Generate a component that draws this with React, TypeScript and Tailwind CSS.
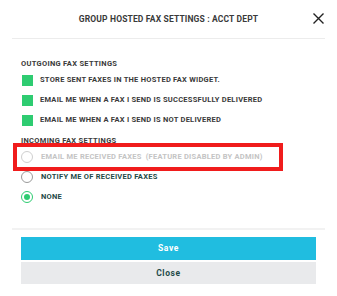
import { useState } from "react";

const outgoing = [
  "Store sent faxes in the hosted fax widget.",
  "Email me when a fax I send is successfully delivered",
  "Email me when a fax I send is not delivered",
];

const incoming = [
  { id: "email", label: "Email me received faxes", note: "(Feature disabled by admin)", disabled: true },
  { id: "notify", label: "Notify me of received faxes" },
  { id: "none", label: "None" },
];

export default function App() {
  const [choice, setChoice] = useState("none");

  return (
    <div className="w-[337px] h-[296px] bg-white font-['Roboto',sans-serif] font-bold uppercase">
      {/* Header */}
      <div className="relative flex h-[38px] items-center justify-center">
        <h2 className="text-[8.5px] tracking-[0.15px] text-[#3a3a3a]">
          Group Hosted Fax Settings : Acct Dept
        </h2>
        <button className="absolute right-[13px] top-[13px] text-[#222]" aria-label="Close">
          <svg width="11" height="11" viewBox="0 0 11 11" fill="none" stroke="currentColor" strokeWidth="1.4">
            <path d="M0.5 0.5L10.5 10.5M10.5 0.5L0.5 10.5" />
          </svg>
        </button>
      </div>
      <div className="mx-3 h-px bg-[#ececec]" />

      <div className="px-[21px] pt-[19px]">
        <p className="h-3 leading-3 text-[7.5px] tracking-[0.3px] text-[#3a3a3a]">Outgoing Fax Settings</p>
        {outgoing.map((label) => (
          <div key={label} className="flex h-5 items-center gap-[7px]">
            <span className="ml-px h-[11px] w-[11px] bg-[#2ecc71]" />
            <span className="text-[7.5px] tracking-[0.25px] text-[#3a3a3a]">{label}</span>
          </div>
        ))}

        <p className="mt-[5px] h-3 leading-3 text-[7.5px] tracking-[0.3px] text-[#3a3a3a]">Incoming Fax Settings</p>
        <div>
          {incoming.map((opt) => {
            const selected = choice === opt.id;
            return (
              <div
                key={opt.id}
                onClick={() => !opt.disabled && setChoice(opt.id)}
                className="relative flex h-5 items-center gap-2 cursor-pointer"
              >
                <span
                  className={
                    opt.disabled
                      ? "h-3 w-3 rounded-full border border-[#cfcfcf]"
                      : selected
                      ? "flex h-3 w-3 items-center justify-center rounded-full border-[1.5px] border-[#2ecc71]"
                      : "h-3 w-3 rounded-full border-[1.5px] border-[#9a9a9a]"
                  }
                >
                  {selected && <span className="h-[6px] w-[6px] rounded-full bg-[#2ecc71]" />}
                </span>
                <span
                  className={
                    opt.disabled
                      ? "text-[7.5px] tracking-[0.25px] text-[#c4c4c4]"
                      : "text-[7.5px] tracking-[0.25px] text-[#1f4a48]"
                  }
                >
                  {opt.label}
                  {opt.note && <span className="ml-1">{opt.note}</span>}
                </span>
                {opt.disabled && (
                  <span className="pointer-events-none absolute -left-2 -top-1 h-7 w-[270px] border-[4.5px] border-[#f01c1c]" />
                )}
              </div>
            );
          })}
        </div>
      </div>

      <div className="mx-3 mt-[21px] h-[2px] bg-[#f2f2f2]" />

      <div className="flex flex-col gap-[2px] px-[21px] pt-[7px]">
        <button className="h-[23px] bg-[#20bde0] text-[8.5px] tracking-[0.6px] text-white">Save</button>
        <button className="h-[22px] bg-[#e9eaec] text-[8.5px] tracking-[0.6px] text-[#1f4a48]">Close</button>
      </div>
    </div>
  );
}
